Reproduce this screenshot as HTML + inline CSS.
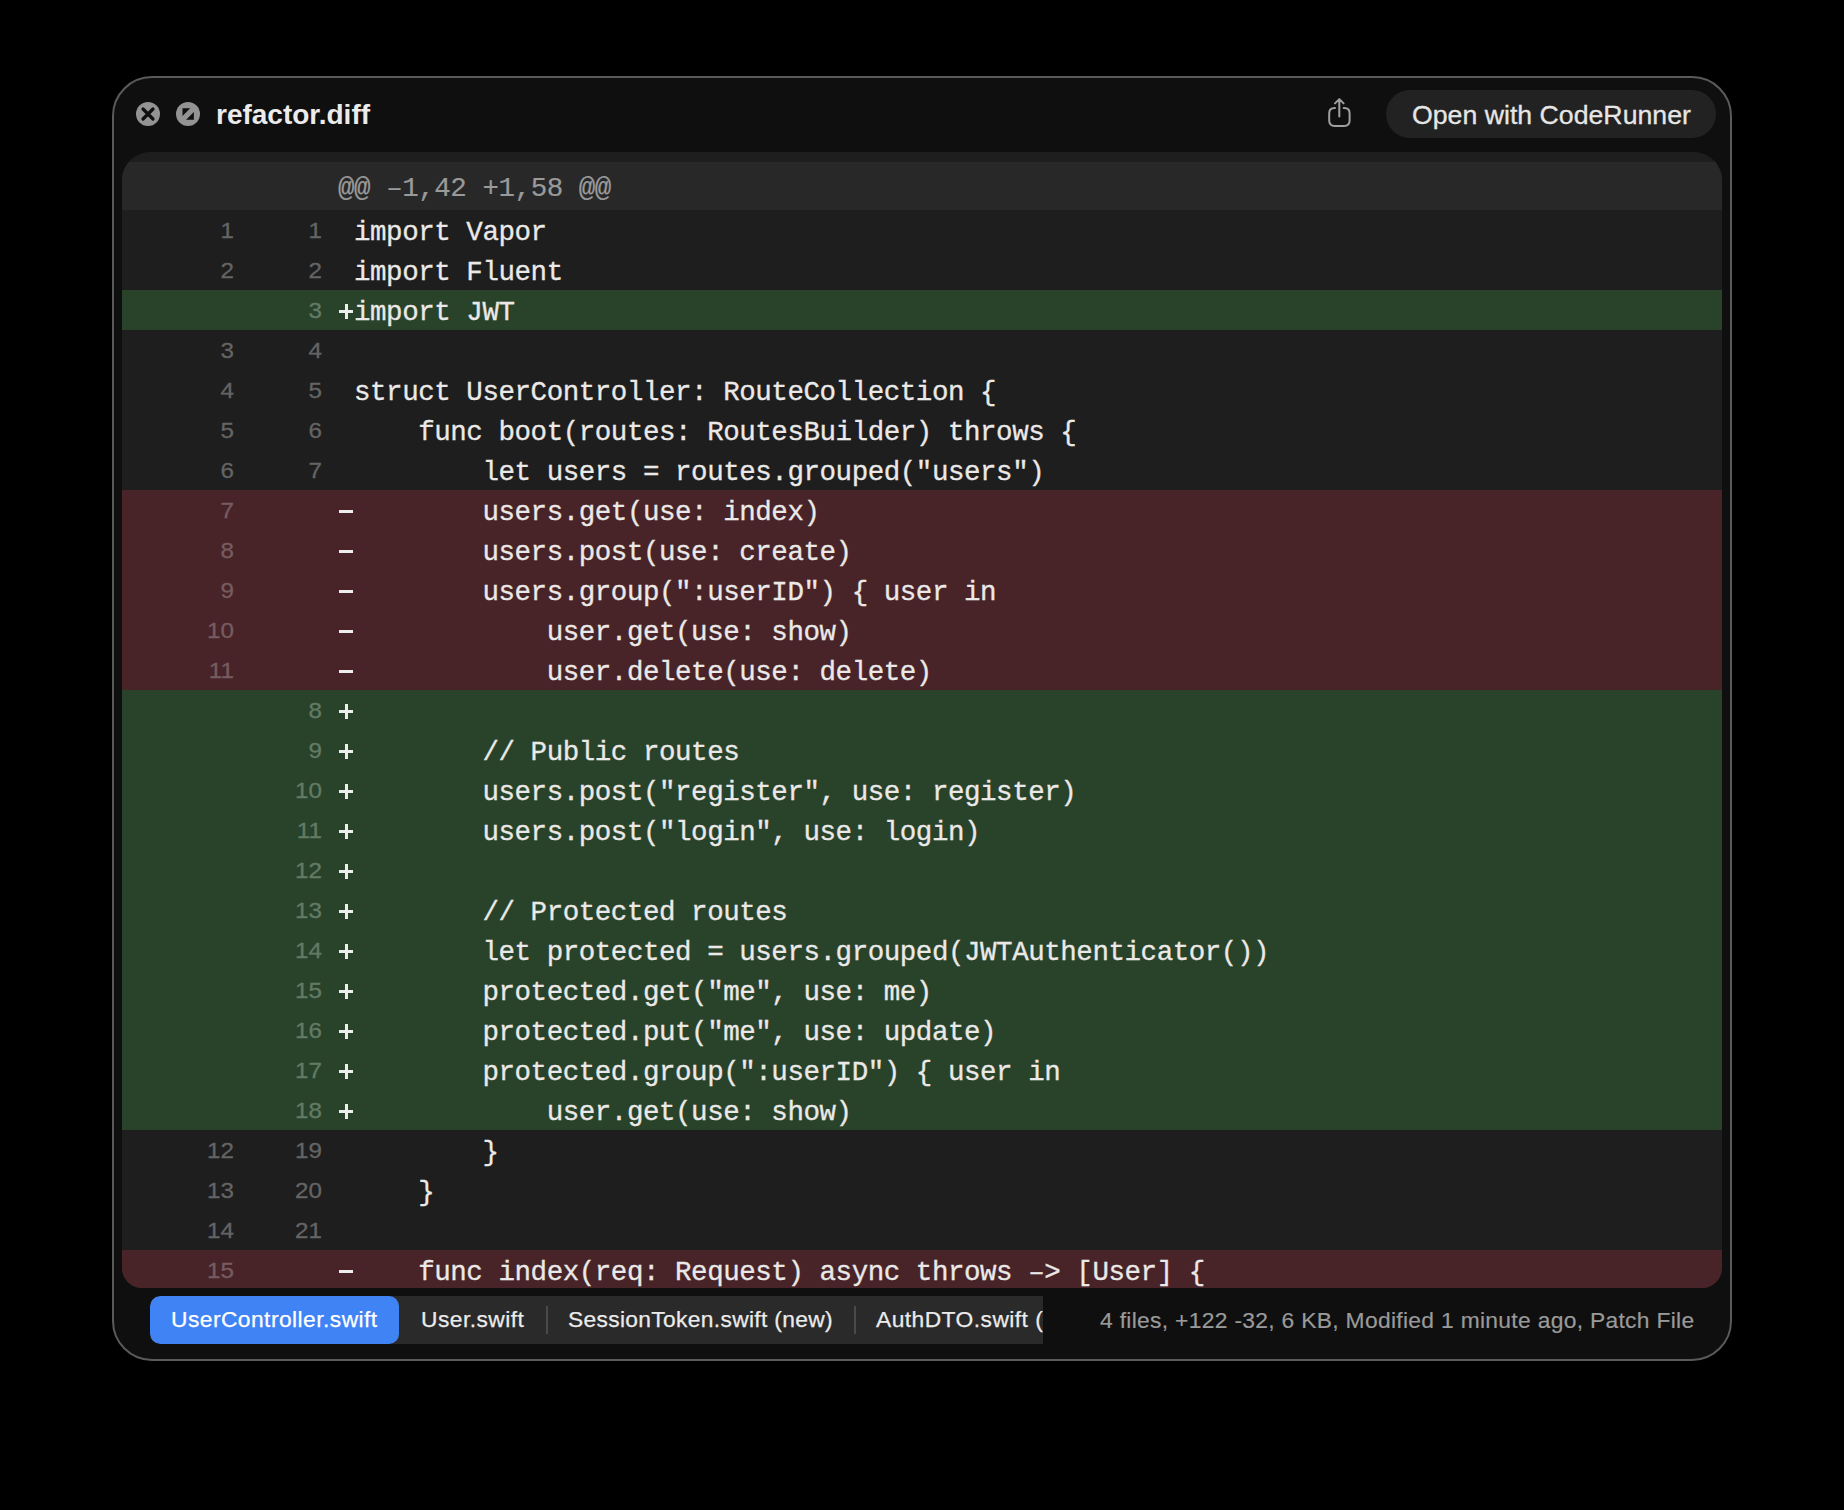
<!DOCTYPE html>
<html><head><meta charset="utf-8">
<style>
*{box-sizing:border-box;margin:0;padding:0}
html,body{width:1844px;height:1510px;background:#000;overflow:hidden}
body{position:relative;font-family:"Liberation Sans",sans-serif}
.win{position:absolute;left:112px;top:76px;width:1620px;height:1285px;border:2px solid #5a5a5a;border-radius:40px;background:#0f0f0f}
.cb{position:absolute;width:24px;height:24px;border-radius:50%;background:#939393;top:102px}
.title{position:absolute;left:216px;top:99px;font-weight:bold;font-size:28px;color:#ebebeb;line-height:32px;white-space:nowrap}
.share{position:absolute;left:1326px;top:97px}
.btn{position:absolute;left:1386px;top:90px;width:330px;height:48px;border-radius:24px;background:#222222;color:#e6e6e6;font-size:26.7px;line-height:50px;padding-left:26px;white-space:nowrap;-webkit-text-stroke:0.3px #e6e6e6}
.panel{position:absolute;left:122px;top:152px;width:1600px;height:1136px;border-radius:28px 28px 20px 20px;background:#1e1e1e;overflow:hidden}
.hh{position:absolute;left:0;top:10px;width:1600px;height:48px;background:#282828;color:#9a9a9a;font-family:"Liberation Mono",monospace;font-size:27.5px;letter-spacing:-0.45px;line-height:53px;padding-left:216px;white-space:pre;-webkit-text-stroke:0.2px #9a9a9a}
.rows{position:absolute;left:0;top:58px;width:1600px}
.r{position:relative;height:40px;background:#1e1e1e;white-space:pre}
.r.a{background:#29432b}
.r.d{background:#482429}
.o,.nn{position:absolute;top:0.5px;line-height:40px;font-size:22px;color:#646464;text-align:right;-webkit-text-stroke:0.3px #646464}
.a .o,.a .nn{color:#637a65;-webkit-text-stroke-color:#637a65}
.d .o,.d .nn{color:#765c60;-webkit-text-stroke-color:#765c60}
.o{left:0;width:112px;transform:scaleX(1.1);transform-origin:112px 0}
.nn{left:0;width:200px;transform:scaleX(1.1);transform-origin:200px 0}
.c{position:absolute;left:232px;top:3px;line-height:40px;font-family:"Liberation Mono",monospace;font-size:27.5px;letter-spacing:-0.45px;color:#ebe9e7;-webkit-text-stroke:0.3px #ebe9e7}
.pl,.mi{position:absolute;left:217px;top:14px;width:14px;height:14px}
.mi::before,.pl::before{content:"";position:absolute;left:0;top:6px;width:14px;height:3px;background:#ededed}
.pl::after{content:"";position:absolute;left:5.5px;top:0;width:3px;height:15px;background:#ededed}
.tabs{position:absolute;left:150px;top:1296px;width:893px;height:48px;background:#2a2a2a;border-radius:10px 0 0 10px;overflow:hidden;white-space:nowrap;font-size:22.8px;letter-spacing:0.45px;color:#ebebeb;-webkit-text-stroke:0.25px #ebebeb}
.tab{position:absolute;top:0;height:48px;line-height:47px}
.sel{left:0;width:249px;background:#3f83f4;border-radius:10px;color:#fff;padding-left:21px;-webkit-text-stroke:0.25px #fff}
.sep{position:absolute;top:10px;width:2px;height:28px;background:#4a4a4a}
.status{position:absolute;left:1100px;top:1296px;height:48px;line-height:49px;font-size:22.8px;letter-spacing:0.32px;color:#9a9a9a;white-space:nowrap;-webkit-text-stroke:0.2px #9a9a9a}
</style></head><body>
<div class="win"></div>
<div class="cb" style="left:136px">
<svg width="24" height="24" viewBox="0 0 24 24" style="position:absolute;left:0;top:0"><path d="M7 7L17 17M17 7L7 17" stroke="#0f0f0f" stroke-width="3.2" stroke-linecap="round"/></svg>
</div>
<div class="cb" style="left:176px">
<svg width="24" height="24" viewBox="0 0 24 24" style="position:absolute;left:0;top:0"><path d="M6.5 6.2H14.2L6.5 13.9Z" fill="#0f0f0f"/><path d="M17.9 10V17.8H10.1Z" fill="#0f0f0f"/></svg>
</div>
<div class="title">refactor.diff</div>
<svg class="share" width="26" height="32" viewBox="0 0 26 32"><path d="M13.3 2.4V19.5M9 6.4L13.3 2.1L17.6 6.4M9 10.9H8.6Q3.2 10.9 3.2 16.3V23.6Q3.2 29 8.6 29H18.2Q23.6 29 23.6 23.6V16.3Q23.6 10.9 18.2 10.9H17.7" fill="none" stroke="#a0a0a0" stroke-width="2" stroke-linecap="round" stroke-linejoin="round"/></svg>
<div class="btn">Open with CodeRunner</div>
<div class="panel">
<div class="hh">@@ &#8211;1,42 +1,58 @@</div>
<div class="rows">
<div class="r n"><span class="o">1</span><span class="nn">1</span><span class="c">import Vapor</span></div>
<div class="r n"><span class="o">2</span><span class="nn">2</span><span class="c">import Fluent</span></div>
<div class="r a"><span class="o"></span><span class="nn">3</span><i class="pl"></i><span class="c">import JWT</span></div>
<div class="r n"><span class="o">3</span><span class="nn">4</span><span class="c"></span></div>
<div class="r n"><span class="o">4</span><span class="nn">5</span><span class="c">struct UserController: RouteCollection {</span></div>
<div class="r n"><span class="o">5</span><span class="nn">6</span><span class="c">    func boot(routes: RoutesBuilder) throws {</span></div>
<div class="r n"><span class="o">6</span><span class="nn">7</span><span class="c">        let users = routes.grouped(&quot;users&quot;)</span></div>
<div class="r d"><span class="o">7</span><span class="nn"></span><i class="mi"></i><span class="c">        users.get(use: index)</span></div>
<div class="r d"><span class="o">8</span><span class="nn"></span><i class="mi"></i><span class="c">        users.post(use: create)</span></div>
<div class="r d"><span class="o">9</span><span class="nn"></span><i class="mi"></i><span class="c">        users.group(&quot;:userID&quot;) { user in</span></div>
<div class="r d"><span class="o">10</span><span class="nn"></span><i class="mi"></i><span class="c">            user.get(use: show)</span></div>
<div class="r d"><span class="o">11</span><span class="nn"></span><i class="mi"></i><span class="c">            user.delete(use: delete)</span></div>
<div class="r a"><span class="o"></span><span class="nn">8</span><i class="pl"></i><span class="c"></span></div>
<div class="r a"><span class="o"></span><span class="nn">9</span><i class="pl"></i><span class="c">        // Public routes</span></div>
<div class="r a"><span class="o"></span><span class="nn">10</span><i class="pl"></i><span class="c">        users.post(&quot;register&quot;, use: register)</span></div>
<div class="r a"><span class="o"></span><span class="nn">11</span><i class="pl"></i><span class="c">        users.post(&quot;login&quot;, use: login)</span></div>
<div class="r a"><span class="o"></span><span class="nn">12</span><i class="pl"></i><span class="c"></span></div>
<div class="r a"><span class="o"></span><span class="nn">13</span><i class="pl"></i><span class="c">        // Protected routes</span></div>
<div class="r a"><span class="o"></span><span class="nn">14</span><i class="pl"></i><span class="c">        let protected = users.grouped(JWTAuthenticator())</span></div>
<div class="r a"><span class="o"></span><span class="nn">15</span><i class="pl"></i><span class="c">        protected.get(&quot;me&quot;, use: me)</span></div>
<div class="r a"><span class="o"></span><span class="nn">16</span><i class="pl"></i><span class="c">        protected.put(&quot;me&quot;, use: update)</span></div>
<div class="r a"><span class="o"></span><span class="nn">17</span><i class="pl"></i><span class="c">        protected.group(&quot;:userID&quot;) { user in</span></div>
<div class="r a"><span class="o"></span><span class="nn">18</span><i class="pl"></i><span class="c">            user.get(use: show)</span></div>
<div class="r n"><span class="o">12</span><span class="nn">19</span><span class="c">        }</span></div>
<div class="r n"><span class="o">13</span><span class="nn">20</span><span class="c">    }</span></div>
<div class="r n"><span class="o">14</span><span class="nn">21</span><span class="c"></span></div>
<div class="r d"><span class="o">15</span><span class="nn"></span><i class="mi"></i><span class="c">    func index(req: Request) async throws &#8211;&gt; [User] {</span></div>
</div>
</div>
<div class="tabs">
<div class="tab sel">UserController.swift</div>
<div class="tab" style="left:271px">User.swift</div>
<div class="sep" style="left:396px"></div>
<div class="tab" style="left:418px;letter-spacing:0.32px">SessionToken.swift (new)</div>
<div class="sep" style="left:704px"></div>
<div class="tab" style="left:726px">AuthDTO.swift (new)</div>
</div>
<div class="status">4 files, +122 -32, 6 KB, Modified 1 minute ago, Patch File</div>
</body></html>
